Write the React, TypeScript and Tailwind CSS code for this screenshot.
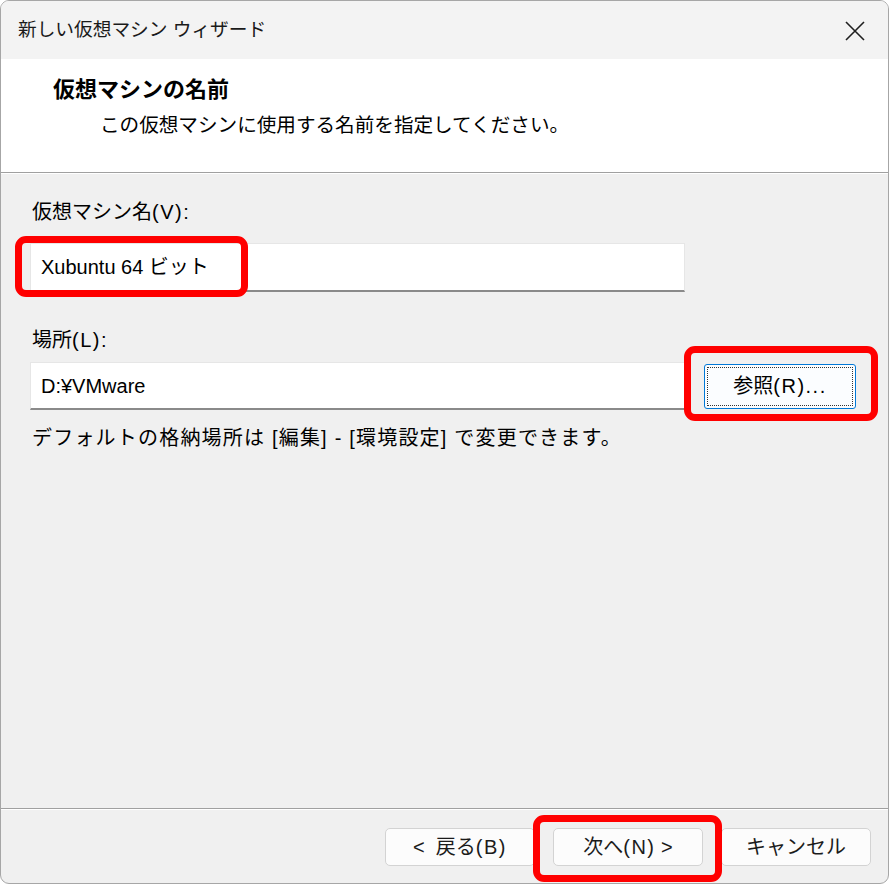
import React from 'react';

// Annotation frame drawn over the dialog (red highlight boxes)
function RedBox({ className }: { className: string }) {
  return (
    <div
      className={`pointer-events-none absolute rounded-[11px] border-[7px] border-[#ff0000] ${className}`}
    />
  );
}

// Latin mnemonic part like "(V):" — the dialog font draws these wider
function Mn({ children }: { children: React.ReactNode }) {
  return <span className="tracking-[1.5px]">{children}</span>;
}

function DialogButton({ children }: { children: React.ReactNode }) {
  return (
    <button className="flex h-[38px] w-[150px] items-center justify-center rounded-[5px] border border-[#d3d3d3] bg-[#fcfcfc] text-[20px] text-[#1b1b1b]">
      <span>{children}</span>
    </button>
  );
}

export default function App() {
  return (
    <div className="h-[885px] w-[891px] bg-white font-['Liberation_Sans','Noto_Sans_CJK_JP',sans-serif]">
      <div className="relative flex h-[884px] w-[889px] flex-col overflow-hidden rounded-[9px] border border-[#a6a6a6] bg-[#f0f0f0]">
        {/* Title bar */}
        <div className="flex h-[58px] shrink-0 items-center justify-between bg-[#f3f3f3] pl-[17px] pr-[22px]">
          <span className="text-[18.7px] text-[#1a1a1a]">新しい仮想マシン ウィザード</span>
          <svg width="22" height="22" viewBox="0 0 22 22" className="mt-[1px]">
            <path d="M2 2 L20 20 M20 2 L2 20" stroke="#1f1f1f" strokeWidth="1.6" fill="none" />
          </svg>
        </div>

        {/* Header */}
        <div className="h-[113px] shrink-0 bg-white pl-[52px] pt-[17px]">
          <div className="text-[22px] font-bold leading-[28px] text-black">仮想マシンの名前</div>
          <div className="mt-[9px] pl-[47px] text-[19.6px] leading-[24px] text-black">
            この仮想マシンに使用する名前を指定してください。
          </div>
        </div>
        <div className="h-px shrink-0 bg-[#a0a0a0]" />
        <div className="h-px shrink-0 bg-white" />

        {/* Body */}
        <div className="flex-1 pl-[29px]">
          <div className="ml-[2px] mt-[26px] text-[20px] leading-[24px] text-black">
            仮想マシン名<Mn>(V):</Mn>
          </div>
          <div className="mt-[19px] flex h-[49px] w-[655px] items-center border border-b-2 border-[#e6e6e6] border-b-[#8a8a8a] bg-white pl-[10px] text-[20px] text-black">
            Xubuntu 64 ビット
          </div>

          <div className="ml-[2px] mt-[36px] text-[20px] leading-[24px] text-black">
            場所<Mn>(L):</Mn>
          </div>
          <div className="mt-[10px] flex items-center">
            <div className="flex h-[48px] w-[655px] items-center border border-b-2 border-[#e6e6e6] border-b-[#8a8a8a] bg-white pl-[10px] text-[20px] text-black">
              D:¥VMware
            </div>
            <button className="ml-[19px] h-[45px] w-[152px] rounded-[3px] border border-[#0078d7] bg-[#fbfdff] p-[2px]">
              <span className="flex h-full w-full items-center justify-center border border-dotted border-[#333] text-[20px] text-black">
                <span>
                  参照<Mn>(R)...</Mn>
                </span>
              </span>
            </button>
          </div>

          <div className="ml-[2px] mt-[16px] text-[20px] leading-[24px] tracking-[1.2px] text-black">
            デフォルトの格納場所は [編集] - [環境設定] で変更できます。
          </div>
        </div>

        <div className="h-px shrink-0 bg-[#a0a0a0]" />
        <div className="h-px shrink-0 bg-white" />

        {/* Footer */}
        <div className="flex h-[73px] shrink-0 justify-end gap-[18px] pr-[17px] pt-[18px]">
          <DialogButton>
            &lt;&nbsp; 戻る<Mn>(B)</Mn>
          </DialogButton>
          <DialogButton>
            次へ<Mn>(N)</Mn> &gt;
          </DialogButton>
          <DialogButton>キャンセル</DialogButton>
        </div>

        <RedBox className="left-[14px] top-[235px] h-[61px] w-[233px]" />
        <RedBox className="left-[683px] top-[345px] h-[75px] w-[194px]" />
        <RedBox className="left-[532px] top-[814px] h-[67px] w-[189px]" />
      </div>
    </div>
  );
}
